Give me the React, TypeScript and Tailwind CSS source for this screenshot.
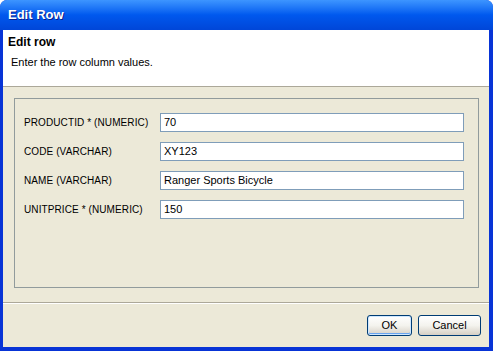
import React from "react";

const fields = [
  { label: "PRODUCTID * (NUMERIC)", value: "70" },
  { label: "CODE (VARCHAR)", value: "XY123" },
  { label: "NAME (VARCHAR)", value: "Ranger Sports Bicycle" },
  { label: "UNITPRICE * (NUMERIC)", value: "150" },
];

function XpButton({ children, isDefault }: { children: React.ReactNode; isDefault?: boolean }) {
  return (
    <button
      className={
        "h-[21px] rounded-[3px] border border-[#003c74] bg-gradient-to-b from-white via-[#f4f3ee] to-[#d6d0c5] text-[11px] text-black " +
        (isDefault ? "w-[45px] shadow-[inset_0_0_0_1px_#cee7ff,inset_0_-1px_0_1px_#69a5f0]" : "w-[63px]")
      }
    >
      {children}
    </button>
  );
}

export default function App() {
  return (
    <div className="bg-white">
      <div className="flex h-[351px] w-[493px] flex-col overflow-hidden rounded-t-[7px] bg-[#0834d6] font-['Liberation_Sans',Arial,sans-serif]">
        {/* title bar */}
        <div className="flex h-[30px] shrink-0 items-center bg-gradient-to-b from-[#3d95ff] via-[#0058ee] to-[#0046d8] pl-[8px]">
          <span className="text-[13px] font-bold text-white [text-shadow:1px_1px_0_#0a1e8c]">Edit Row</span>
        </div>

        <div className="mb-[4px] ml-[3px] mr-[4px] flex flex-1 flex-col bg-[#ece9d8]">
          {/* header */}
          <div className="h-[57px] shrink-0 border-b border-[#aca899] bg-white px-[5px] pt-[5px] text-[11px] text-black">
            <div className="text-[12px] font-bold leading-[14px]">Edit row</div>
            <div className="mt-[6px] pl-[3px] leading-[14px]">Enter the row column values.</div>
          </div>

          {/* fields panel */}
          <div className="pl-[11px] pr-[10px] pt-[11px]">
            <div className="flex h-[190px] flex-col gap-[10px] border border-[#919b9c] pl-[9px] pr-[14px] pt-[14px]">
              {fields.map((f) => (
                <div key={f.label} className="flex h-[19px] items-center">
                  <span className="w-[136px] shrink-0 text-[10px] tracking-[0.1px] text-black">{f.label}</span>
                  <div className="flex h-[19px] flex-1 items-center border border-[#7f9db9] bg-white pl-[3px] text-[11px] text-black">
                    {f.value}
                  </div>
                </div>
              ))}
            </div>
          </div>

          {/* separator */}
          <div className="mt-[14px] border-t border-b border-t-[#aca899] border-b-white" />

          {/* buttons */}
          <div className="flex justify-end gap-[6px] pr-[8px] pt-[11px]">
            <XpButton isDefault>OK</XpButton>
            <XpButton>Cancel</XpButton>
          </div>
        </div>
      </div>
    </div>
  );
}
